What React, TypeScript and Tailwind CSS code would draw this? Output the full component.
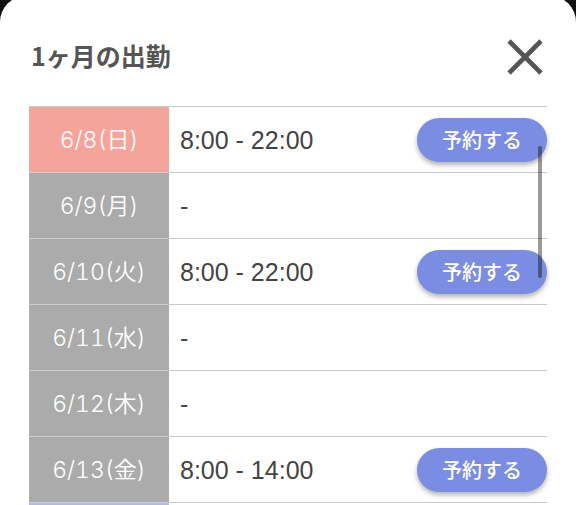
import clsx from "clsx";

type Tone = "weekday" | "saturday" | "sunday";

interface Shift {
  id: number;
  day: string;
  time: string;
  tone: Tone;
  bookable?: boolean;
}

const shifts: Shift[] = [
  {id: 1, day: "6/8(日)", time: "8:00 - 22:00", tone: "sunday", bookable: true},
  {id: 2, day: "6/9(月)", time: "-", tone: "weekday"},
  {id: 3, day: "6/10(火)", time: "8:00 - 22:00", tone: "weekday", bookable: true},
  {id: 4, day: "6/11(水)", time: "-", tone: "weekday"},
  {id: 5, day: "6/12(木)", time: "-", tone: "weekday"},
  {id: 6, day: "6/13(金)", time: "8:00 - 14:00", tone: "weekday", bookable: true},
  {id: 7, day: "", time: "", tone: "saturday"},
];

const toneClass: Record<Tone, string> = {
  weekday: "bg-[#ababab]",
  saturday: "bg-[#aeb9ea]",
  sunday: "bg-[#f5a49c]",
};

const CloseButton = () => (
  <button type="button" aria-label="閉じる" className="text-[#555]">
    <svg className="size-9" viewBox="0 0 36 36" fill="none" stroke="currentColor" strokeWidth="4.6">
      <path d="M2 2 34 34M34 2 2 34" />
    </svg>
  </button>
);

const ShiftRow = ({shift}: {shift: Shift}) => (
  <tr className="h-[66px]">
    <th
      scope="row"
      className={clsx(
        "w-[140px] border-t border-[#ccc] p-0 text-center font-['Inter','Noto_Sans_CJK_JP',sans-serif] text-[23px] leading-8 font-[350] text-white tabular-nums",
        toneClass[shift.tone]
      )}>
      {shift.day}
    </th>
    <td className="border-t border-[#c8c8c8] py-0 pr-0 pl-[11px]">
      <div className="flex items-center justify-between">
        <span className="font-['Liberation_Sans','Noto_Sans_CJK_JP',sans-serif] text-[25px] leading-8 text-[#444]">
          {shift.time}
        </span>
        {shift.bookable && (
          <button
            type="button"
            className="h-11 w-[130px] rounded-full bg-[#7b8de2] text-xl font-medium text-white shadow-[0_3px_5px_rgba(0,0,0,0.3)]">
            予約する
          </button>
        )}
      </div>
    </td>
  </tr>
);

const App = () => {
  return (
    <div className="h-screen overflow-hidden bg-[#111] font-['Noto_Sans_CJK_JP',sans-serif]">
      <section className="-mt-1 min-h-full rounded-t-[26px] bg-white px-[29px] pt-[43px] pb-1">
        <header className="flex h-[67px] items-start justify-between pr-1 pl-[2px]">
          <h1 className="text-[25px] leading-8 font-bold text-[#555]">1ヶ月の出勤</h1>
          <CloseButton />
        </header>

        <div className="relative">
          <table className="w-full border-separate border-spacing-0">
            <tbody>
              {shifts.map((shift) => (
                <ShiftRow key={shift.id} shift={shift} />
              ))}
            </tbody>
          </table>
          {/* スクロールバー */}
          <div className="absolute top-10 right-[5px] h-[132px] w-1 rounded-full bg-black/40" />
        </div>
      </section>
    </div>
  );
};

export default App;
